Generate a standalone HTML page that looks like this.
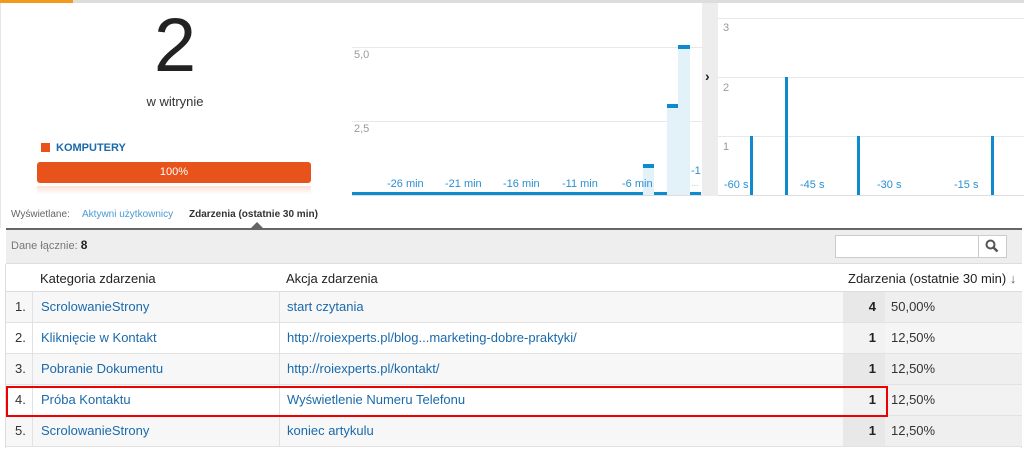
<!DOCTYPE html>
<html><head><meta charset="utf-8"><style>
*{margin:0;padding:0;box-sizing:border-box}
body{width:1024px;height:450px;background:#fff;position:relative;overflow:hidden;font-family:"Liberation Sans",Arial,sans-serif}
.a{position:absolute}
.t{font-size:12px;color:#999}
.lnk{color:#1a6aab}
.row{position:absolute;left:6px;width:1016px;height:31px;border-bottom:1px solid #e2e2e2;font-size:13px}
.row div{position:absolute;top:0;height:30px;line-height:30px}
.b{position:absolute;background:#0e8bcd}
.lt{position:absolute;background:#e3f1f9}
</style></head><body>
<div class="a" style="left:0;top:0;width:73px;height:3px;background:#f29a1c"></div>
<div class="a" style="left:73px;top:0;width:951px;height:3px;background:#ddd"></div>
<div class="a" style="left:0;top:3px;width:1px;height:225px;background:#e6e6e6"></div>
<div class="a" style="left:100px;top:6px;width:150px;text-align:center;font-size:76px;color:#222;line-height:80px">2</div>
<div class="a" style="left:100px;top:94px;width:150px;text-align:center;font-size:13px;color:#333">w witrynie</div>
<div class="a" style="left:41px;top:143px;width:9px;height:9px;background:#e8531c"></div>
<div class="a" style="left:56px;top:142px;font-size:11px;font-weight:bold;color:#1a6aab">KOMPUTERY</div>
<div class="a" style="left:37px;top:162px;width:274px;height:21px;background:#e8531c;border-radius:3px;color:#fff;font-size:11px;text-align:center;line-height:21px">100%</div>
<div class="a" style="left:37px;top:186px;width:274px;height:8px;background:linear-gradient(#fbe0d4,#fff)"></div>
<!-- chart 1 -->
<div class="a" style="left:352px;top:47px;width:350px;border-top:1px solid #e8e8e8"></div>
<div class="a" style="left:352px;top:121px;width:350px;border-top:1px solid #e8e8e8"></div>
<div class="a t" style="left:354px;top:49px;font-size:11px">5,0</div>
<div class="a t" style="left:354px;top:123px;font-size:11px">2,5</div>
<div class="b" style="left:352px;top:192px;width:291px;height:3px"></div>
<div class="lt" style="left:643px;top:165px;width:11px;height:30px"></div>
<div class="b" style="left:643px;top:164px;width:11px;height:4px"></div>
<div class="b" style="left:654px;top:192px;width:13px;height:3px"></div>
<div class="lt" style="left:667px;top:105px;width:11px;height:90px"></div>
<div class="b" style="left:667px;top:104px;width:11px;height:4px"></div>
<div class="lt" style="left:678px;top:45px;width:12px;height:150px"></div>
<div class="b" style="left:678px;top:45px;width:12px;height:4px"></div>
<div class="b" style="left:690px;top:192px;width:11px;height:3px"></div>
<div class="a" style="left:352px;top:195px;width:350px;border-top:1px solid #ddd"></div>
<div class="a" style="left:387px;top:178px;font-size:11px;color:#2a8fd0">-26 min</div>
<div class="a" style="left:445px;top:178px;font-size:11px;color:#2a8fd0">-21 min</div>
<div class="a" style="left:503px;top:178px;font-size:11px;color:#2a8fd0">-16 min</div>
<div class="a" style="left:562px;top:178px;font-size:11px;color:#2a8fd0">-11 min</div>
<div class="a" style="left:622px;top:178px;font-size:11px;color:#2a8fd0">-6 min</div>
<div class="a" style="left:691px;top:165px;font-size:11px;color:#2a8fd0">-1</div>
<div class="a" style="left:691px;top:178px;font-size:9px;color:#9cc8e6">...</div>
<!-- divider -->
<div class="a" style="left:702px;top:3px;width:16px;height:193px;background:#ededed"></div>
<div class="a" style="left:705px;top:68px;font-size:14px;font-weight:bold;color:#222">&#8250;</div>
<!-- chart 2 -->
<div class="a" style="left:718px;top:18px;width:306px;border-top:1px solid #e8e8e8"></div>
<div class="a" style="left:718px;top:77px;width:306px;border-top:1px solid #e8e8e8"></div>
<div class="a" style="left:718px;top:136px;width:306px;border-top:1px solid #e8e8e8"></div>
<div class="a t" style="left:723px;top:22px;font-size:11px">3</div>
<div class="a t" style="left:723px;top:82px;font-size:11px">2</div>
<div class="a t" style="left:723px;top:141px;font-size:11px">1</div>
<div class="b" style="left:750px;top:136px;width:3px;height:59px"></div>
<div class="b" style="left:785px;top:77px;width:3px;height:118px"></div>
<div class="b" style="left:857px;top:136px;width:3px;height:59px"></div>
<div class="b" style="left:991px;top:136px;width:3px;height:59px"></div>
<div class="a" style="left:718px;top:195px;width:306px;border-top:1px solid #ddd"></div>
<div class="a" style="left:724px;top:179px;font-size:11px;color:#2a8fd0">-60 s</div>
<div class="a" style="left:800px;top:179px;font-size:11px;color:#2a8fd0">-45 s</div>
<div class="a" style="left:877px;top:179px;font-size:11px;color:#2a8fd0">-30 s</div>
<div class="a" style="left:954px;top:179px;font-size:11px;color:#2a8fd0">-15 s</div>
<!-- tabs -->
<div class="a" style="left:11px;top:209px;font-size:10px;color:#666">Wyświetlane:</div>
<div class="a" style="left:82px;top:209px;font-size:10px;color:#4a9ad4">Aktywni użytkownicy</div>
<div class="a" style="left:189px;top:209px;font-size:10px;font-weight:bold;color:#333">Zdarzenia (ostatnie 30 min)</div>
<div class="a" style="left:6px;top:228px;width:1016px;height:2px;background:#666"></div>
<div class="a" style="left:251px;top:222px;width:0;height:0;border-left:6px solid transparent;border-right:6px solid transparent;border-bottom:6px solid #666"></div>
<!-- toolbar -->
<div class="a" style="left:6px;top:230px;width:1016px;height:34px;background:#eee;border-bottom:1px solid #ddd"></div>
<div class="a" style="left:11px;top:238px;font-size:11px;color:#777">Dane łącznie: <b style="color:#222;font-size:12px">8</b></div>
<div class="a" style="left:835px;top:235px;width:172px;height:23px;background:#fff;border:1px solid #ccc"></div>
<div class="a" style="left:978px;top:235px;width:29px;height:23px;border-left:1px solid #ccc"></div>
<svg class="a" style="left:985px;top:239px" width="14" height="14"><circle cx="5.5" cy="5.5" r="4" fill="none" stroke="#555" stroke-width="2"/><path d="M8.5 8.5L12.5 12.5" stroke="#555" stroke-width="2.5"/></svg>
<!-- header -->
<div class="a" style="left:6px;top:264px;width:1016px;height:28px;border-bottom:1px solid #ddd;font-size:13px;color:#222">
<div class="a" style="left:34px;top:7px">Kategoria zdarzenia</div>
<div class="a" style="left:280px;top:7px">Akcja zdarzenia</div>
<div class="a" style="left:842px;top:7px">Zdarzenia (ostatnie 30 min) <span style="color:#666">&#8595;</span></div>
</div>
<div class="a" style="left:5px;top:264px;width:1px;height:184px;background:#ddd"></div>
<div class="a" style="left:1021px;top:292px;width:1px;height:156px;background:#ddd"></div>

<div class="row" style="top:292px;background:#f7f7f7"><div style="left:0;width:27px;border-right:1px solid #e2e2e2;padding-left:9px;color:#333">1.</div><div style="left:27px;width:247px;border-right:1px solid #e2e2e2;padding-left:8px" class="lnk">ScrolowanieStrony</div><div style="left:274px;width:563px;padding-left:7px" class="lnk">start czytania</div><div style="left:837px;width:42px;background:#e8e8e8;text-align:right;padding-right:9px;font-weight:bold;color:#222">4</div><div style="left:879px;width:137px;background:#efefef;padding-left:6px;color:#333">50,00%</div></div>
<div class="row" style="top:323px;background:#fff"><div style="left:0;width:27px;border-right:1px solid #e2e2e2;padding-left:9px;color:#333">2.</div><div style="left:27px;width:247px;border-right:1px solid #e2e2e2;padding-left:8px" class="lnk">Kliknięcie w Kontakt</div><div style="left:274px;width:563px;padding-left:7px" class="lnk">http://roiexperts.pl/blog...marketing-dobre-praktyki/</div><div style="left:837px;width:42px;background:#f2f2f2;text-align:right;padding-right:9px;font-weight:bold;color:#222">1</div><div style="left:879px;width:137px;background:#f5f5f5;padding-left:6px;color:#333">12,50%</div></div>
<div class="row" style="top:354px;background:#f7f7f7"><div style="left:0;width:27px;border-right:1px solid #e2e2e2;padding-left:9px;color:#333">3.</div><div style="left:27px;width:247px;border-right:1px solid #e2e2e2;padding-left:8px" class="lnk">Pobranie Dokumentu</div><div style="left:274px;width:563px;padding-left:7px" class="lnk">http://roiexperts.pl/kontakt/</div><div style="left:837px;width:42px;background:#e8e8e8;text-align:right;padding-right:9px;font-weight:bold;color:#222">1</div><div style="left:879px;width:137px;background:#efefef;padding-left:6px;color:#333">12,50%</div></div>
<div class="row" style="top:385px;background:#fff"><div style="left:0;width:27px;border-right:1px solid #e2e2e2;padding-left:9px;color:#333">4.</div><div style="left:27px;width:247px;border-right:1px solid #e2e2e2;padding-left:8px" class="lnk">Próba Kontaktu</div><div style="left:274px;width:563px;padding-left:7px" class="lnk">Wyświetlenie Numeru Telefonu</div><div style="left:837px;width:42px;background:#f2f2f2;text-align:right;padding-right:9px;font-weight:bold;color:#222">1</div><div style="left:879px;width:137px;background:#f2f2f2;padding-left:6px;color:#333">12,50%</div></div>
<div class="row" style="top:416px;background:#f7f7f7"><div style="left:0;width:27px;border-right:1px solid #e2e2e2;padding-left:9px;color:#333">5.</div><div style="left:27px;width:247px;border-right:1px solid #e2e2e2;padding-left:8px" class="lnk">ScrolowanieStrony</div><div style="left:274px;width:563px;padding-left:7px" class="lnk">koniec artykulu</div><div style="left:837px;width:42px;background:#e8e8e8;text-align:right;padding-right:9px;font-weight:bold;color:#222">1</div><div style="left:879px;width:137px;background:#efefef;padding-left:6px;color:#333">12,50%</div></div>

<div class="a" style="left:6px;top:386px;width:882px;height:31px;border:2px solid #e00"></div>
</body></html>
